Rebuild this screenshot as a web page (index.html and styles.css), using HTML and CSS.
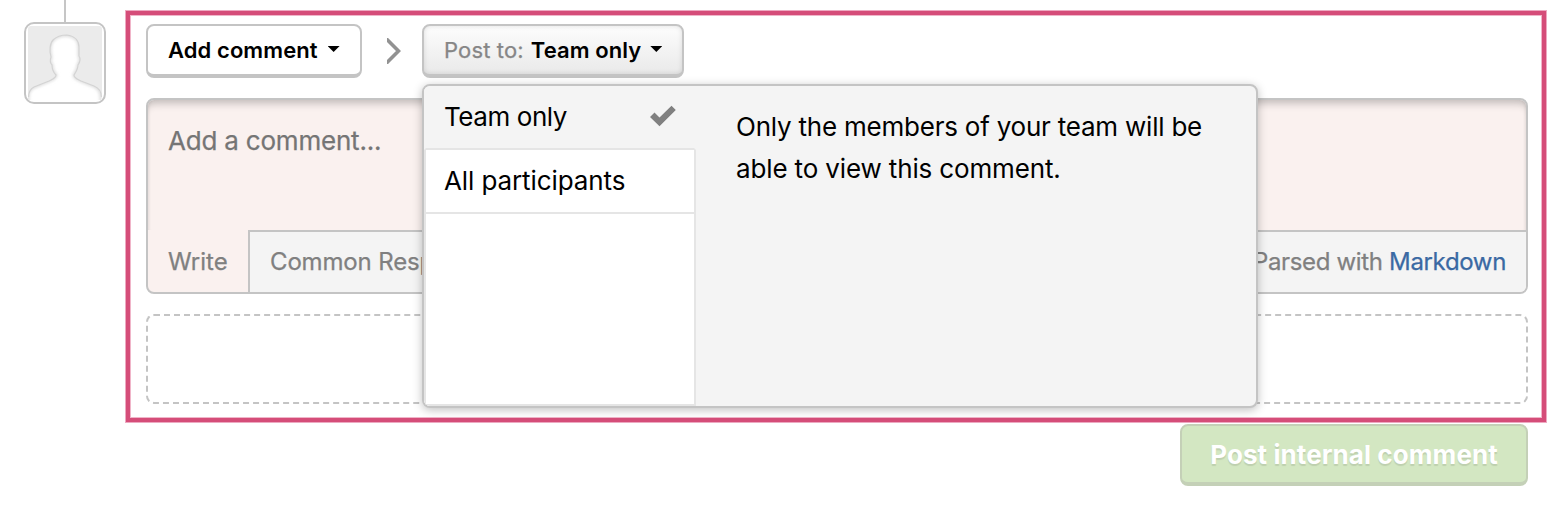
FILE: index.html
```html
<!DOCTYPE html>
<html lang="en">
<head>
<meta charset="utf-8">
<title>Add comment</title>
<link rel="stylesheet" href="styles.css">
</head>
<body>
<div class="page">
  <aside class="timeline">
    <div class="timeline-line"></div>
    <div class="avatar">
      <svg width="74" height="74" viewBox="0 0 74 74">
        <defs><filter id="soft" x="-10%" y="-10%" width="120%" height="120%"><feGaussianBlur stdDeviation="1.5"/></filter>
        <clipPath id="body"><path d="M0 74V71C0 66 2 63 6 61L21 55C25 53 28 52 28 49C25 46 24 43 24 39C22 37 22 34 23 31C21 25 22 17 25 14C29 10 35 9 39 9C47 10 51 15 51 21V30C53 33 52 36 50 39C50 43 48 46 46 49C46 52 49 53 53 55L66 60C71 62 73 66 73 71V74Z"/></clipPath></defs>
        <rect width="74" height="74" rx="3" fill="#ebebeb"/>
        <g clip-path="url(#body)">
          <rect width="74" height="74" fill="#fff"/>
          <path class="silhouette-shade" filter="url(#soft)" d="M0 76V71C0 66 2 63 6 61L21 55C25 53 28 52 28 49C25 46 24 43 24 39C22 37 22 34 23 31C21 25 22 17 25 14C29 10 35 9 39 9C47 10 51 15 51 21V30C53 33 52 36 50 39C50 43 48 46 46 49C46 52 49 53 53 55L66 60C71 62 73 66 73 71V76"/>
        </g>
        <path class="silhouette-edge" d="M.6 71C.6 66 2 63 6 61L21 55C25 53 28 52 28 49C25 46 24 43 24 39C22 37 22 34 23 31C21 25 22 17 25 14C29 10 35 9 39 9C47 10 51 15 51 21V30C53 33 52 36 50 39C50 43 48 46 46 49C46 52 49 53 53 55L66 60C71 62 73.4 66 73.4 71"/>
      </svg>
    </div>
  </aside>
  <main class="composer">
    <section class="panel">
      <div class="toolbar">
        <button class="select"><b class="select-action">Add comment</b><span class="caret"></span></button>
        <svg class="chevron" width="14" height="26" viewBox="0 0 14 26"><path d="M-1 .5L11.5 13L-1 25.5"/></svg>
        <div class="audience">
          <button class="select select-open"><span class="select-label">Post to:</span><b class="select-value">Team only</b><span class="caret"></span></button>
          <div class="menu">
            <div class="options">
              <div class="option option-current"><span class="option-team">Team only</span><svg width="26" height="22" viewBox="0 0 26 22"><path d="M0 12L4.5 7.5L9.5 12.5L21.5 .8L25.8 5L9.5 21.2Z"/></svg></div>
              <div class="option"><span class="option-all">All participants</span></div>
              <div class="options-rest"></div>
            </div>
            <p class="hint"><span class="hint-first">Only the members of your team will be</span><br><span class="hint-second">able to view this comment.</span></p>
          </div>
        </div>
      </div>
      <div class="editor">
        <div class="input"><span class="placeholder">Add a comment...</span></div>
        <div class="tabs">
          <span class="tab tab-active"><span class="tab-write">Write</span></span>
          <div class="tab-bar"><span class="tab-common">Common Responses</span><span class="parsed">Parsed with <a class="link">Markdown</a></span></div>
        </div>
      </div>
      <div class="dropzone"></div>
    </section>
    <button class="submit"><span class="submit-text">Post internal comment</span></button>
  </main>
</div>
</body>
</html>
```
FILE: styles.css
```css
* { box-sizing: border-box; }
body { margin: 0; background: #fff; color: #000; font-family: Inter, "Liberation Sans", sans-serif; }
button { font: inherit; color: inherit; margin: 0; }
.page { display: flex; width: 1556px; height: 512px; overflow: hidden; padding-left: 24px; }

.timeline { width: 82px; margin-right: 19px; display: flex; flex-direction: column; align-items: center; }
.timeline-line { width: 2px; height: 22px; background: #c6c6c6; }
.avatar { width: 82px; height: 82px; padding: 2px; border: 2px solid #c4c4c4; border-radius: 10px; }
.avatar svg { display: block; }
.silhouette-shade { fill: none; stroke: #dcdcdc; stroke-width: 3; }
.silhouette-edge { fill: none; stroke: #d3d3d3; stroke-width: 1.2; }

.composer { width: 1422px; padding-top: 10px; display: flex; flex-direction: column; }
.panel { height: 413px; padding: 13px 18px 18px 20px; border: 1px solid #eda9c1; box-shadow: inset 0 0 0 4px #d54d79, inset 0 0 0 5px #f0b5c9; }
.toolbar { display: flex; align-items: flex-start; height: 54px; margin-bottom: 20px; }
.select { display: flex; align-items: center; width: 216px; height: 54px; padding: 0 0 0 20px; border: 2px solid #c4c4c4; border-bottom-width: 4px; border-radius: 8px; background: #fff; font-size: 22px; line-height: 28px; white-space: nowrap; }
.select b { font-weight: 600; letter-spacing: .08px; }
.select-open { width: 262px; background: linear-gradient(#fdfdfd, #e9e9e9); box-shadow: inset 0 0 5px rgba(0, 0, 0, .12); }
.select-label { color: #868686; margin-right: 7px; letter-spacing: .15px; -webkit-text-stroke: .25px; }
.caret { width: 12px; height: 6px; margin: 0 0 2px 10px; background: #000; clip-path: polygon(0 0, 100% 0, 50% 100%); }
.select-open .caret { margin-left: 9px; }
.chevron { margin: 14px 21px 0 25px; fill: none; stroke: #929292; stroke-width: 3.6; }

.audience { position: relative; }
.menu { position: absolute; z-index: 2; top: 60px; left: 0; width: 836px; height: 324px; display: flex; border: 2px solid #c4c4c4; border-radius: 8px; background: #f4f4f4; box-shadow: 0 2px 10px rgba(0, 0, 0, .25); overflow: hidden; font-size: 26px; white-space: nowrap; }
.options { width: 272px; display: flex; flex-direction: column; }
.option { height: 64px; display: flex; align-items: center; justify-content: space-between; padding: 0 18px 2px; background: #fff; border: 2px solid #e5e5e5; border-top: 0; }
.option-current { background: #f4f4f4; border-left-color: #f4f4f4; border-right-color: #f4f4f4; }
.option svg { fill: #808080; }
.option-team { letter-spacing: -.42px; }
.option-all { letter-spacing: -.1px; }
.options-rest { flex: 1; background: #fff; border: 2px solid #e5e5e5; border-top: 0; }
.hint { margin: 20px 0 0 40px; line-height: 42px; }
.hint-first { letter-spacing: -.22px; }
.hint-second { letter-spacing: -.14px; }

.editor { height: 196px; border: 2px solid #c4c4c4; border-radius: 8px; background: #faf1ef; overflow: hidden; }
.input { height: 130px; padding: 25px 20px; box-shadow: inset 0 9px 8px -6px rgba(0, 0, 0, .24), inset 3px 0 3px -2px rgba(0, 0, 0, .08), inset -3px 0 3px -2px rgba(0, 0, 0, .08); border-radius: 6px 6px 0 0; color: #757575; font-size: 26px; line-height: 32px; letter-spacing: -.2px; -webkit-text-stroke: .25px; }
.tabs { display: flex; height: 62px; color: #808080; font-size: 24px; line-height: 60px; white-space: nowrap; -webkit-text-stroke: .25px; }
.tab { width: 100px; padding: 2px 0 0 20px; }
.tab-bar { flex: 1; display: flex; justify-content: space-between; padding: 0 20px; background: #f4f4f4; border: 2px solid #c4c4c4; border-width: 2px 0 0 2px; }
.tab-common { letter-spacing: -.15px; }
.parsed { letter-spacing: -.34px; }
.link { color: #3a69a3; }
.dropzone { height: 90px; margin-top: 20px; border: 2px dashed #c4c4c4; border-radius: 8px; }

.submit { align-self: flex-end; width: 348px; height: 62px; margin: 1px 19px 0 0; padding: 0; border: 2px solid #c4d0b7; border-bottom-width: 4px; border-radius: 8px; background: #d3e7c2; color: #fff; font-size: 26px; font-weight: 700; letter-spacing: .08px; text-shadow: 0 2px 1px rgba(0, 0, 0, .1); white-space: nowrap; }
```
